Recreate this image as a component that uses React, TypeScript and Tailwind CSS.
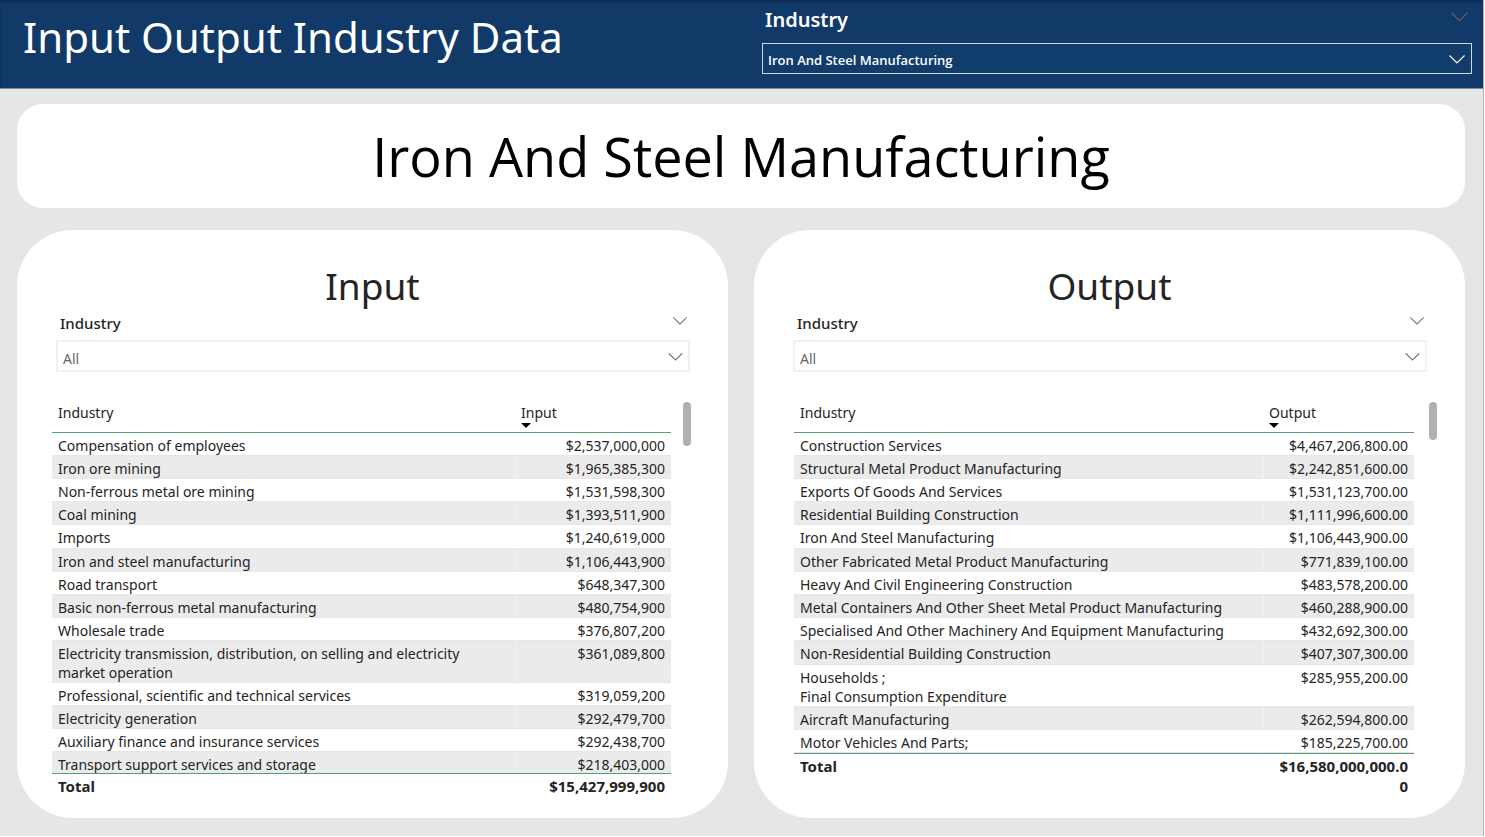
type Row = [string, string];

const inputRows: Row[] = [
  ['Compensation of employees', '$2,537,000,000'],
  ['Iron ore mining', '$1,965,385,300'],
  ['Non-ferrous metal ore mining', '$1,531,598,300'],
  ['Coal mining', '$1,393,511,900'],
  ['Imports', '$1,240,619,000'],
  ['Iron and steel manufacturing', '$1,106,443,900'],
  ['Road transport', '$648,347,300'],
  ['Basic non-ferrous metal manufacturing', '$480,754,900'],
  ['Wholesale trade', '$376,807,200'],
  ['Electricity transmission, distribution, on selling and electricity market operation', '$361,089,800'],
  ['Professional, scientific and technical services', '$319,059,200'],
  ['Electricity generation', '$292,479,700'],
  ['Auxiliary finance and insurance services', '$292,438,700'],
  ['Transport support services and storage', '$218,403,000'],
];

const outputRows: Row[] = [
  ['Construction Services', '$4,467,206,800.00'],
  ['Structural Metal Product Manufacturing', '$2,242,851,600.00'],
  ['Exports Of Goods And Services', '$1,531,123,700.00'],
  ['Residential Building Construction', '$1,111,996,600.00'],
  ['Iron And Steel Manufacturing', '$1,106,443,900.00'],
  ['Other Fabricated Metal Product Manufacturing', '$771,839,100.00'],
  ['Heavy And Civil Engineering Construction', '$483,578,200.00'],
  ['Metal Containers And Other Sheet Metal Product Manufacturing', '$460,288,900.00'],
  ['Specialised And Other Machinery And Equipment Manufacturing', '$432,692,300.00'],
  ['Non-Residential Building Construction', '$407,307,300.00'],
  ['Households ;\nFinal Consumption Expenditure', '$285,955,200.00'],
  ['Aircraft Manufacturing', '$262,594,800.00'],
  ['Motor Vehicles And Parts;', '$185,225,700.00'],
];

function Chevron({ className }: { className: string }) {
  return (
    <svg viewBox="0 0 16 9" className={className} fill="none" stroke="currentColor" aria-hidden="true">
      <path d="M0.5 0.5 L8 8 L15.5 0.5" strokeWidth="1.2" />
    </svg>
  );
}

interface PanelProps {
  id: string;
  title: string;
  rows: Row[];
  total: string;
  tableClass: string;
  valueClass: string;
  thumbClass: string;
}

function Panel({ id, title, rows, total, tableClass, valueClass, thumbClass }: PanelProps) {
  return (
    <section className="min-w-0 flex-1 rounded-[56px] bg-white pt-8 pb-[21px]">
      <h2 className="text-center text-[37px] leading-[48px] text-[#252423]">{title}</h2>
      <div className="mr-[38px] ml-[39px]">
        <div className="flex h-[30px] items-start justify-between pt-[3px] pr-[3px] pl-1">
          <label htmlFor={id} className="text-[15px] leading-5 font-medium text-[#252423]">Industry</label>
          <button type="button" aria-label="Expand filter" className="mt-1 text-[#605e5c]">
            <Chevron className="h-2 w-[14px]" />
          </button>
        </div>
        <div className="relative">
          <select id={id} className="block h-8 w-full appearance-none border-2 border-[#f0f0f0] bg-white px-[5px] pt-[5px] text-sm leading-5 text-[#666666]">
            <option>All</option>
          </select>
          <Chevron className="pointer-events-none absolute top-[13px] right-[7px] h-2 w-[15px] text-[#605e5c]" />
        </div>
      </div>
      <div className={tableClass}>
        <div className="h-[395px] min-w-0 flex-1 overflow-hidden">
          <table className="w-full table-fixed border-separate border-spacing-0 text-sm leading-5 text-[#252423]">
            <colgroup>
              <col />
              <col className={valueClass} />
            </colgroup>
            <thead>
              <tr>
                <th scope="col" className="sticky top-0 h-[31px] border-b border-b-[#55a070] bg-white px-[6px] pt-[1px] text-left align-top font-normal">Industry</th>
                <th scope="col" aria-sort="descending" className="sticky top-0 h-[31px] border-b border-b-[#55a070] bg-white px-[6px] pt-[1px] text-left align-top font-normal">
                  {title}
                  <svg viewBox="0 0 10 5" className="block h-[5px] w-[10px]" aria-hidden="true">
                    <path d="M0 0H10L5 5Z" fill="#000" />
                  </svg>
                </th>
              </tr>
            </thead>
            <tbody className="leading-[19px]">
              {rows.map(([name, value]) => (
                <tr key={name} className="align-top even:bg-[#ebebeb] nth-[5n]:h-6">
                  <td className="border-b border-b-[#e6e6e6] px-[6px] pt-[3px] whitespace-pre-line">{name}</td>
                  <td className="border-b border-l border-b-[#e6e6e6] border-l-white/30 px-[6px] pt-[3px] text-right">{value}</td>
                </tr>
              ))}
            </tbody>
            <tfoot>
              <tr className="align-top text-[15px]">
                <th scope="row" className="sticky bottom-0 border-t border-t-[#55a070] bg-white px-[6px] pt-[2px] pb-[1px] text-left font-bold">Total</th>
                <td className="sticky bottom-0 border-t border-t-[#55a070] bg-white pt-[2px] pr-[6px] pb-[1px] pl-[14px] text-right font-bold break-all">{total}</td>
              </tr>
            </tfoot>
          </table>
        </div>
        <div className={thumbClass} />
      </div>
    </section>
  );
}

export default function App() {
  return (
    <div className="min-h-screen bg-white pr-[1px] font-['Noto_Sans','Open_Sans',sans-serif]">
      <div className="min-h-[836px] border-r border-[#b3b3b3] bg-[#e6e6e6]">
        <header className="flex h-[89px] justify-between border-b border-[#7890ad] bg-[#113a69] pr-[11px] pl-[23px] text-white shadow-[inset_0_2px_3px_rgba(0,0,0,0.2)]">
          <h1 className="pt-[7px] text-[42px] leading-[60px]">Input Output Industry Data</h1>
          <div className="w-[49%]">
            <div className="flex h-[43px] justify-between pt-[6px] pr-1 pl-[3px]">
              <label htmlFor="main-industry" className="text-xl leading-7 font-semibold">Industry</label>
              <button type="button" aria-label="Expand filter" className="mt-[6px] self-start text-[#605e5c]">
                <Chevron className="h-[10px] w-[17px]" />
              </button>
            </div>
            <div className="relative">
              <select id="main-industry" className="block h-[31px] w-full appearance-none border border-[#d0d9e2] bg-[#113d6d] px-[5px] pt-[3px] font-['Open_Sans',sans-serif] text-[13px] leading-5 font-semibold">
                <option>Iron And Steel Manufacturing</option>
              </select>
              <Chevron className="pointer-events-none absolute top-3 right-[7px] h-[9px] w-4" />
            </div>
          </div>
        </header>
        <main className="flex flex-col gap-[22px] pt-[15px] pr-[18px] pb-[18px] pl-[17px]">
          <div className="flex h-[104px] items-center justify-center rounded-[26px] bg-white font-['Open_Sans',sans-serif] text-[54px] leading-[72px] text-black">
            Iron And Steel Manufacturing
          </div>
          <div className="flex items-start gap-[26px]">
            <Panel
              id="input-industry"
              title="Input"
              rows={inputRows}
              total="$15,427,999,900"
              tableClass="mt-[30px] mr-[37px] ml-[35px] flex gap-3"
              valueClass="w-[156px]"
              thumbClass="h-11 w-2 rounded bg-[#b0b0b0]"
            />
            <Panel
              id="output-industry"
              title="Output"
              rows={outputRows}
              total="$16,580,000,000.00"
              tableClass="mt-[30px] mr-7 ml-10 flex gap-[15px]"
              valueClass="w-[151px]"
              thumbClass="h-[38px] w-2 rounded bg-[#b0b0b0]"
            />
          </div>
        </main>
      </div>
    </div>
  );
}
